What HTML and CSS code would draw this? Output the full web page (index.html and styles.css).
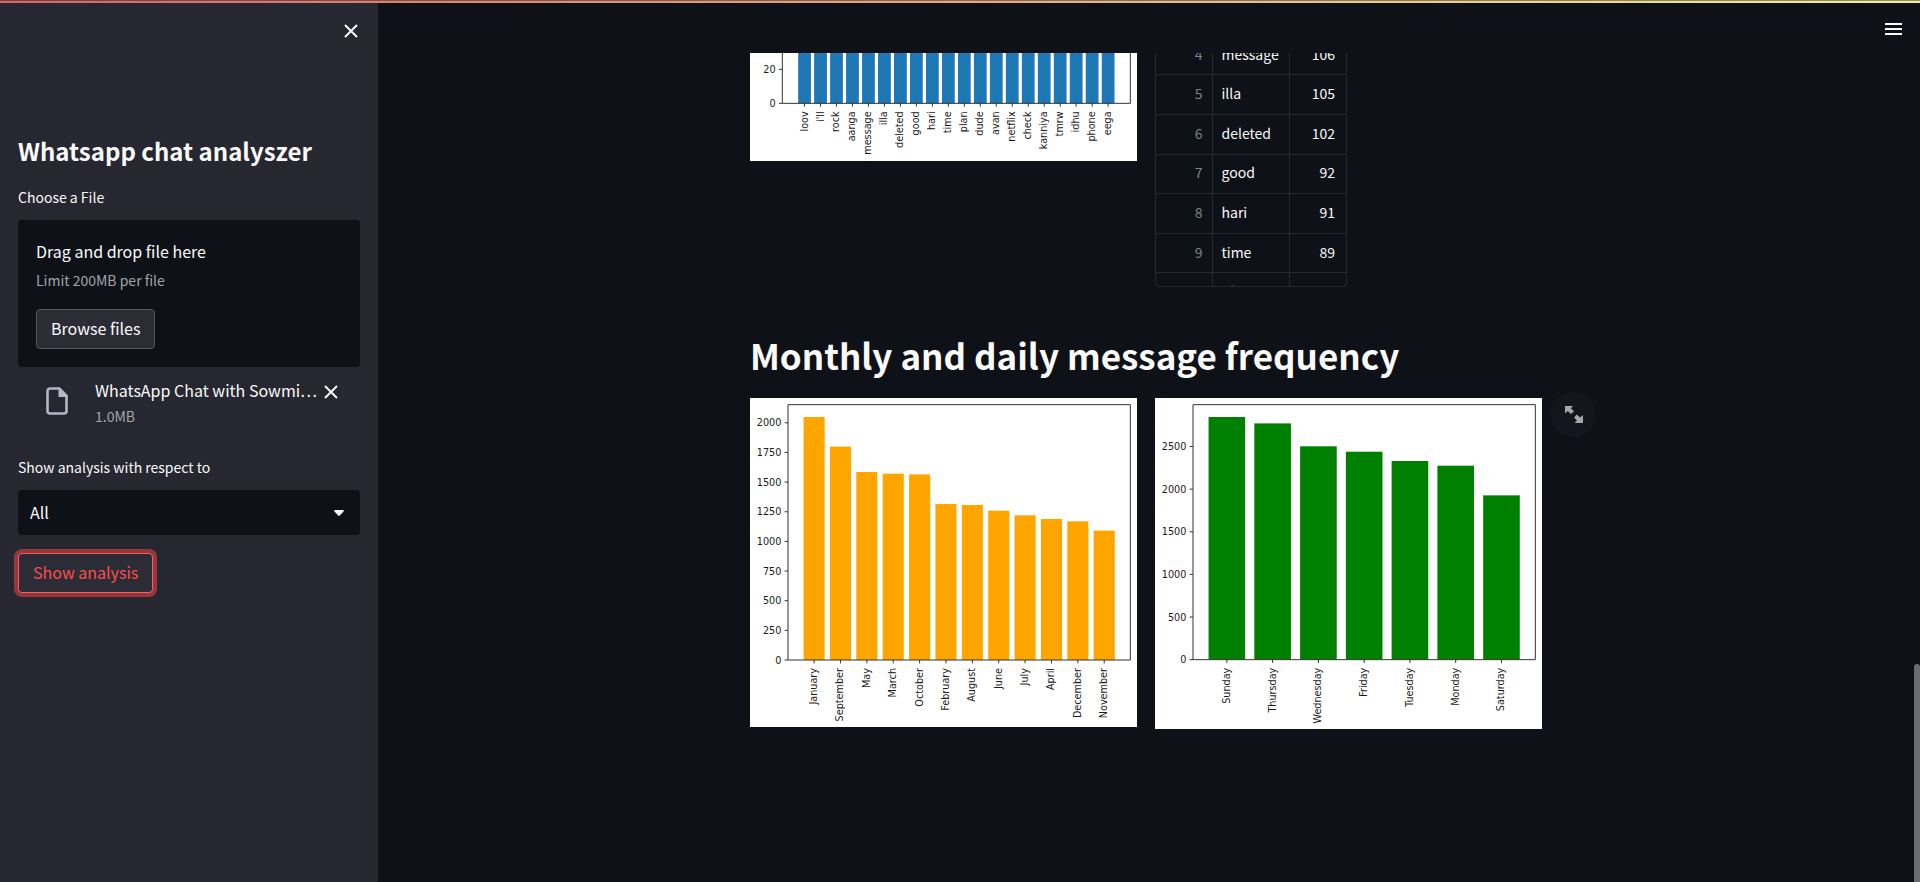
FILE: index.html
```
<!DOCTYPE html>
<html lang="en">
<head>
<meta charset="utf-8">
<title>Whatsapp chat analyszer</title>
<link rel="stylesheet" href="styles.css">
</head>
<body>
<div class="decoration"></div>
<div class="app">
  <aside class="sidebar">
    <div class="sidebar-top">
      <button class="icon-button" type="button" aria-label="Close sidebar">
        <svg class="cross" viewBox="0 0 14 14"><path d="M1 1L13 13M13 1L1 13"/></svg>
      </button>
    </div>
    <h2 class="sidebar-title">Whatsapp chat analyszer</h2>
    <label class="label" for="browse">Choose a File</label>
    <section class="dropzone">
      <span class="drop-title">Drag and drop file here</span>
      <span class="drop-limit">Limit 200MB per file</span>
      <button class="button" id="browse" type="button">Browse files</button>
    </section>
    <div class="file">
      <svg class="file-icon" viewBox="0 0 22 28"><path d="M13 1.500H4A2.500 2.500 0 0 0 1.500 4V24A2.500 2.500 0 0 0 4 26.500H18A2.500 2.500 0 0 0 20.500 24V9" fill="none" stroke="#b4b5c6" stroke-width="2.600"/><path d="M12.500 0.200H14L22 8.500V10H12.500Z" fill="#b4b5c6"/></svg>
      <div class="file-text">
        <span class="file-name">WhatsApp Chat with Sowmi…</span>
        <span class="file-size">1.0MB</span>
      </div>
      <button class="icon-button file-remove" type="button" aria-label="Remove file">
        <svg class="cross" viewBox="0 0 14 14"><path d="M1 1L13 13M13 1L1 13"/></svg>
      </button>
    </div>
    <label class="label" for="user">Show analysis with respect to</label>
    <div class="select-wrap">
      <select class="select" id="user"><option>All</option></select>
      <svg class="arrow" viewBox="0 0 10 6"><path d="M1 0H9Q10.500 0.300 9.500 1.500L6 5.300Q5 6.300 4 5.300L0.500 1.500Q-0.500 0.300 1 0Z" fill="#fafafa"/></svg>
    </div>
    <button class="button button-active" type="button">Show analysis</button>
  </aside>
  <main class="main">
    <header class="header">
      <button class="icon-button" type="button" aria-label="Menu">
        <svg class="menu" viewBox="0 0 17 12"><path d="M0 1H17M0 6H17M0 11H17"/></svg>
      </button>
    </header>
    <div class="scroller">
      <div class="block">
        <div class="columns columns-words">
          <svg class="chart" id="words" role="img" aria-label="Most common words"></svg>
          <div class="table-frame">
            <table class="table">
              <tbody>
                <tr><th scope="row">4</th><td>message</td><td class="number">106</td></tr>
                <tr><th scope="row">5</th><td>illa</td><td class="number">105</td></tr>
                <tr><th scope="row">6</th><td>deleted</td><td class="number">102</td></tr>
                <tr><th scope="row">7</th><td>good</td><td class="number">92</td></tr>
                <tr><th scope="row">8</th><td>hari</td><td class="number">91</td></tr>
                <tr><th scope="row">9</th><td>time</td><td class="number">89</td></tr>
                <tr><th scope="row">10</th><td>plan</td><td class="number">88</td></tr>
              </tbody>
            </table>
          </div>
        </div>
        <h1 class="heading">Monthly and daily message frequency</h1>
        <div class="columns">
          <svg class="chart" id="months" role="img" aria-label="Messages per month"></svg>
          <div class="figure">
            <svg class="chart" id="days" role="img" aria-label="Messages per day"></svg>
            <button class="expand" type="button" aria-label="View fullscreen">
              <svg class="expand-icon" viewBox="0 0 18 17"><path d="M0 0H8L5.800 2.300L9 5.300L6 8L2.700 5L0 7.500ZM18 17H9.500L12 14.500L9 11.500L11.800 8.500L15 11.500L18 9Z" fill="#a6a8ab"/></svg>
            </button>
          </div>
        </div>
      </div>
    </div>
  </main>
</div>
<div class="thumb"></div>
<script src="charts.js"></script>
</body>
</html>
```
FILE: styles.css
```
* { box-sizing: border-box; }

body {
  margin: 0;
  background: #0e1117;
  color: #fafafa;
  font: 16px/24px "Noto Sans CJK SC", "Source Sans Pro", sans-serif;
}

button, select {
  font: inherit;
  color: inherit;
}

.decoration {
  position: fixed;
  inset: 0 0 auto;
  height: 3px;
  border-top: 1px solid rgba(0, 0, 0, 0.4);
  background: linear-gradient(90deg, #d0686a, #f2efa0) border-box;
  z-index: 2;
}

.app {
  display: flex;
  height: 100vh;
}

.sidebar {
  display: flex;
  flex-direction: column;
  flex: 0 0 378px;
  padding: 3px 18px 0;
  background: #262730;
}

.sidebar-top {
  display: flex;
  justify-content: flex-end;
  padding: 19px 0 0;
  height: 130px;
}

.icon-button {
  display: flex;
  align-items: center;
  justify-content: center;
  width: 18px;
  height: 18px;
  padding: 0;
  border: 0;
  background: none;
}

.cross {
  width: 14px;
  height: 14px;
  fill: none;
  stroke: #fafafa;
  stroke-width: 2;
}

.sidebar-title {
  margin: 0 0 16px;
  font-size: 24px;
  line-height: 36px;
  font-weight: 600;
}

.label {
  margin-bottom: 11px;
  font-size: 14px;
  line-height: 24px;
}

.dropzone {
  display: flex;
  flex-direction: column;
  align-items: flex-start;
  padding: 19px 18px 18px;
  border-radius: 4px;
  background: #0e1117;
}

.drop-limit {
  margin: 5px 0 17px;
  font-size: 14px;
  color: #a3a4a9;
}

.button {
  height: 40px;
  padding: 0 14px 2px;
  border: 1px solid #54555d;
  border-radius: 4px;
  background: #2b2c36;
}

.file {
  display: flex;
  padding: 11px 20px 0 28px;
  height: 78px;
}

.file-icon {
  width: 22px;
  height: 28px;
  margin-top: 9px;
}

.file-text {
  display: flex;
  flex-direction: column;
  flex: 1;
  gap: 2px;
  min-width: 0;
  padding-left: 27px;
}

.file-name {
  white-space: nowrap;
}

.file-size {
  font-size: 14px;
  color: #a3a4a9;
}

.file-remove {
  margin-top: 5px;
}

.file + .label {
  margin-top: 10px;
}

.select-wrap {
  display: grid;
  align-items: center;
}

.select {
  grid-area: 1 / 1;
  height: 45px;
  padding: 0 12px 2px;
  border: 0;
  border-radius: 4px;
  background: #0e1117;
  appearance: none;
}

.arrow {
  grid-area: 1 / 1;
  justify-self: end;
  width: 10px;
  height: 6px;
  margin-right: 16px;
  pointer-events: none;
}

.button-active {
  align-self: flex-start;
  margin-top: 18px;
  border-color: #ff5c5c;
  color: #ff4b4b;
  box-shadow: 0 0 0 4px #96373d;
}

.main {
  display: flex;
  flex-direction: column;
  flex: 1;
  min-width: 0;
  padding-right: 6px;
}

.header {
  display: flex;
  justify-content: flex-end;
  flex: 0 0 53px;
  padding: 20px 12px 0;
}

.menu {
  width: 17px;
  height: 12px;
  stroke: #fafafa;
  stroke-width: 2;
}

.scroller {
  flex: 1;
  overflow: hidden;
}

.block {
  max-width: 828px;
  margin: 0 auto;
  padding: 0 18px;
}

.columns {
  display: grid;
  grid-template-columns: 1fr 1fr;
  align-items: start;
  gap: 18px;
}

.chart {
  display: block;
  width: 100%;
  background: #fff;
  font-family: "DejaVu Sans", sans-serif;
  font-size: 29px;
}

.chart text { fill: #1a1a1a; }

.axis {
  fill: none;
  stroke: #333;
  stroke-width: 3;
}

.table-frame {
  justify-self: start;
  height: 252px;
  margin-top: -18px;
  overflow: hidden;
  border: 1px solid #262730;
  border-radius: 4px;
}

.table {
  width: 190px;
  height: 277px;
  border-collapse: collapse;
  table-layout: fixed;
  font-size: 14px;
  line-height: 20px;
}

.table th,
.table td {
  padding: 0 9px 3px;
  border-bottom: 1px solid #262730;
  text-align: left;
}

.table th {
  width: 56px;
  color: #808288;
  font-weight: 400;
  text-align: right;
}

.table td { border-left: 1px solid #262730; }

.table .number {
  width: 57px;
  padding-right: 11px;
  text-align: right;
}

.heading {
  margin: 39px 0 15px;
  font-size: 35px;
  line-height: 57px;
  font-weight: 600;
}

.figure { position: relative; }

.expand {
  position: absolute;
  top: -6px;
  left: 100%;
  display: flex;
  align-items: center;
  justify-content: center;
  width: 45px;
  height: 45px;
  margin-left: 9px;
  padding: 0;
  border: 0;
  border-radius: 50%;
  background: #13161e;
}

.expand-icon {
  width: 18px;
  height: 17px;
}

.thumb {
  position: fixed;
  right: 0;
  bottom: 0;
  width: 6px;
  height: 218px;
  border-radius: 3px 3px 0 0;
  background: #6b6c70;
}
```
FILE: charts.js
```
const NS = "http://www.w3.org/2000/svg";

function add(parent, name, attrs, text) {
  const el = document.createElementNS(NS, name);
  for (const key in attrs) el.setAttribute(key, attrs[key]);
  if (text !== undefined) el.textContent = text;
  parent.appendChild(el);
}

// Bars leave a 5% margin inside the axes; each bar takes 80% of its slot.
function draw(id, o) {
  const svg = document.getElementById(id);
  svg.setAttribute("viewBox", `0 0 1161 ${o.height}`);
  const right = 1141;
  const n = o.bars.length;
  const slot = (right - o.left) / 1.1 / (n - 0.2);
  const first = o.left + (right - o.left) / 22 + slot * 0.4;
  o.bars.forEach(([label, value], i) => {
    const x = first + i * slot;
    const y = o.bottom - value * o.scale;
    add(svg, "rect", { x: x - slot * 0.4, y, width: slot * 0.8, height: o.bottom - y, fill: o.color });
    add(svg, "path", { class: "axis", d: `M${x} ${o.bottom}v10` });
    add(svg, "text", { transform: `translate(${x + 9} ${o.bottom + 24}) rotate(-90)`, "text-anchor": "end" }, label);
  });
  for (let v = 0; v <= o.max; v += o.step) {
    const y = o.bottom - v * o.scale;
    add(svg, "path", { class: "axis", d: `M${o.left} ${y}h-10` });
    add(svg, "text", { x: o.left - 20, y: y + 11, "text-anchor": "end" }, v);
  }
  add(svg, "path", { class: "axis", d: `M${o.left} ${o.top}H${right}V${o.bottom}H${o.left}Z` });
}

draw("words", {
  height: 324, left: 97, top: -700, bottom: 151, scale: 5.1, step: 20, max: 20, color: "#1f77b4",
  bars: ["loov", "i'll", "rock", "aanga", "message", "illa", "deleted", "good", "hari", "time",
    "plan", "dude", "avan", "netflix", "check", "kanniya", "tmrw", "idhu", "phone", "eega"].map(w => [w, 80])
});

draw("months", {
  height: 987, left: 114, top: 20, bottom: 786, scale: 0.3558, step: 250, max: 2000, color: "orange",
  bars: [["January", 2049], ["September", 1799], ["May", 1585], ["March", 1571], ["October", 1565],
    ["February", 1315], ["August", 1307], ["June", 1259], ["July", 1220], ["April", 1189],
    ["December", 1169], ["November", 1091]]
});

draw("days", {
  height: 993, left: 114, top: 20, bottom: 785, scale: 0.2558, step: 500, max: 2500, color: "green",
  bars: [["Sunday", 2846], ["Thursday", 2771], ["Wednesday", 2502], ["Friday", 2439],
    ["Tuesday", 2330], ["Monday", 2275], ["Saturday", 1927]]
});
```
